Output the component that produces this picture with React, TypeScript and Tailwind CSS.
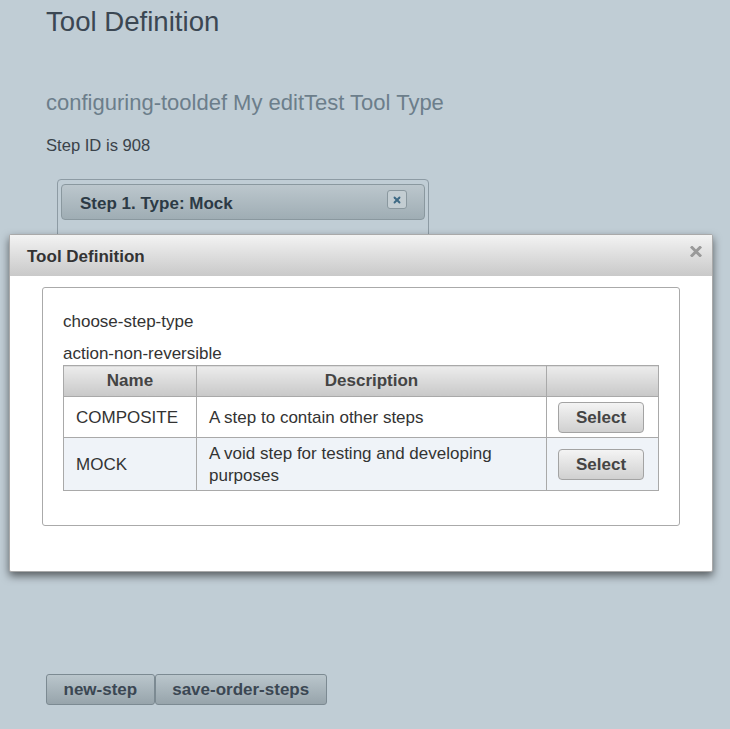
import { X } from 'lucide-react';

interface StepType {
  name: string;
  description: string;
}

const stepTypes: StepType[] = [
  { name: 'COMPOSITE', description: 'A step to contain other steps' },
  { name: 'MOCK', description: 'A void step for testing and developing purposes' },
];

export default function App() {
  return (
    <div className="relative min-h-screen w-full bg-[#c0cdd5] font-['Liberation_Sans',Arial,sans-serif] text-[#333]">
      <div className="pl-[46px] pt-[6px]">
        <h1 className="text-[27.6px] leading-[32px] font-normal text-[#3b4753]">Tool Definition</h1>
        <h2 className="mt-[52px] text-[22px] leading-[25px] font-normal text-[#6c7e8b]">
          configuring-tooldef My editTest Tool Type
        </h2>
        <p className="mt-[21px] text-[16.6px] leading-[20px] text-[#3a4249]">Step ID is 908</p>

        <div className="mt-[23px] ml-[11px] w-[372px] border border-[#8d9ba4] rounded-[4px] px-[3px] pt-[4px] pb-[4px]">
          <div className="flex items-start justify-between h-[36px] border border-[#8a989f] rounded-[4px] bg-linear-to-b from-[#bcc7cd] to-[#9fadb4] pl-[18px] pr-[17px]">
            <span className="pt-[9px] text-[17px] leading-[20px] font-bold text-[#2c3a45]">Step 1. Type: Mock</span>
            <button className="mt-[5px] w-[20px] h-[19px] flex items-center justify-center border border-[#8a989f] rounded-[3px] bg-[#c3cdd2]">
              <X size={10} strokeWidth={4.5} className="text-[#3e6a85]" />
            </button>
          </div>
          <div className="h-[40px]" />
        </div>

        <div className="mt-[409px] flex">
          <button className="h-[31px] px-[16.5px] border border-[#7c8a92] rounded-[3px] bg-linear-to-b from-[#bac6cc] to-[#97a4ab] text-[17px] font-bold text-[#3b4753]">
            new-step
          </button>
          <button className="h-[31px] px-[16.5px] border border-[#7c8a92] rounded-[3px] bg-linear-to-b from-[#bac6cc] to-[#97a4ab] text-[17px] font-bold text-[#3b4753]">
            save-order-steps
          </button>
        </div>
        <div className="h-[24px]" />
      </div>

      {/* modal dialog */}
      <div className="absolute left-[9px] top-[234px] w-[704px] h-[338px] bg-white border border-[#a9a9a9] rounded-[2px] shadow-[0_4px_9px_rgba(0,0,0,0.55)]">
        <div className="relative h-[41px] bg-linear-to-b from-[#f3f3f3] to-[#c9c9c9] pl-[17px] pt-[10px]">
          <span className="text-[17px] leading-[20px] font-bold text-[#333]">Tool Definition</span>
          <svg className="absolute right-[10px] top-[11px]" width="12" height="11" viewBox="0 0 12 11">
            <path d="M2 1.5 L10 9.5 M10 1.5 L2 9.5" stroke="#9a9a9a" strokeWidth="3" strokeLinecap="square" />
          </svg>
        </div>
        <div className="px-[32px] pt-[11px]">
          <div className="h-[239px] border border-[#aaa] rounded-[3px] pl-[20px] pr-[21px] pt-[24px]">
            <p className="text-[17px] leading-[20px]">choose-step-type</p>
            <p className="mt-[12px] text-[17px] leading-[20px]">action-non-reversible</p>
            <table className="mt-[1px] w-[595px] table-fixed border-collapse text-[17px] leading-[20px]">
              <thead>
                <tr className="h-[31px]">
                  <th className="w-[133px] border border-[#a9a9a9] bg-linear-to-b from-[#ececec] to-[#c8c8c8] font-bold text-[#444]">Name</th>
                  <th className="w-[350px] border border-[#a9a9a9] bg-linear-to-b from-[#ececec] to-[#c8c8c8] font-bold text-[#444]">Description</th>
                  <th className="w-[112px] border border-[#a9a9a9] bg-linear-to-b from-[#ececec] to-[#c8c8c8]" />
                </tr>
              </thead>
              <tbody>
                {stepTypes.map((t, i) => (
                  <tr key={t.name} className={i === 1 ? 'h-[53px] bg-[#eff3f8]' : 'h-[41px] bg-white'}>
                    <td className="border border-[#a9a9a9] pl-[12px] pt-[1px]">{t.name}</td>
                    <td className="border border-[#a9a9a9] pl-[12px] pr-[12px] pt-[1px] leading-[22px]">{t.description}</td>
                    <td className="border border-[#a9a9a9] pl-[11px] pt-[1px]">
                      <button className="w-[86px] h-[31px] border border-[#a3a3a3] rounded-[4px] bg-linear-to-b from-[#f4f4f4] to-[#d0d0d0] font-bold text-[#444]">
                        Select
                      </button>
                    </td>
                  </tr>
                ))}
              </tbody>
            </table>
          </div>
        </div>
      </div>
    </div>
  );
}
